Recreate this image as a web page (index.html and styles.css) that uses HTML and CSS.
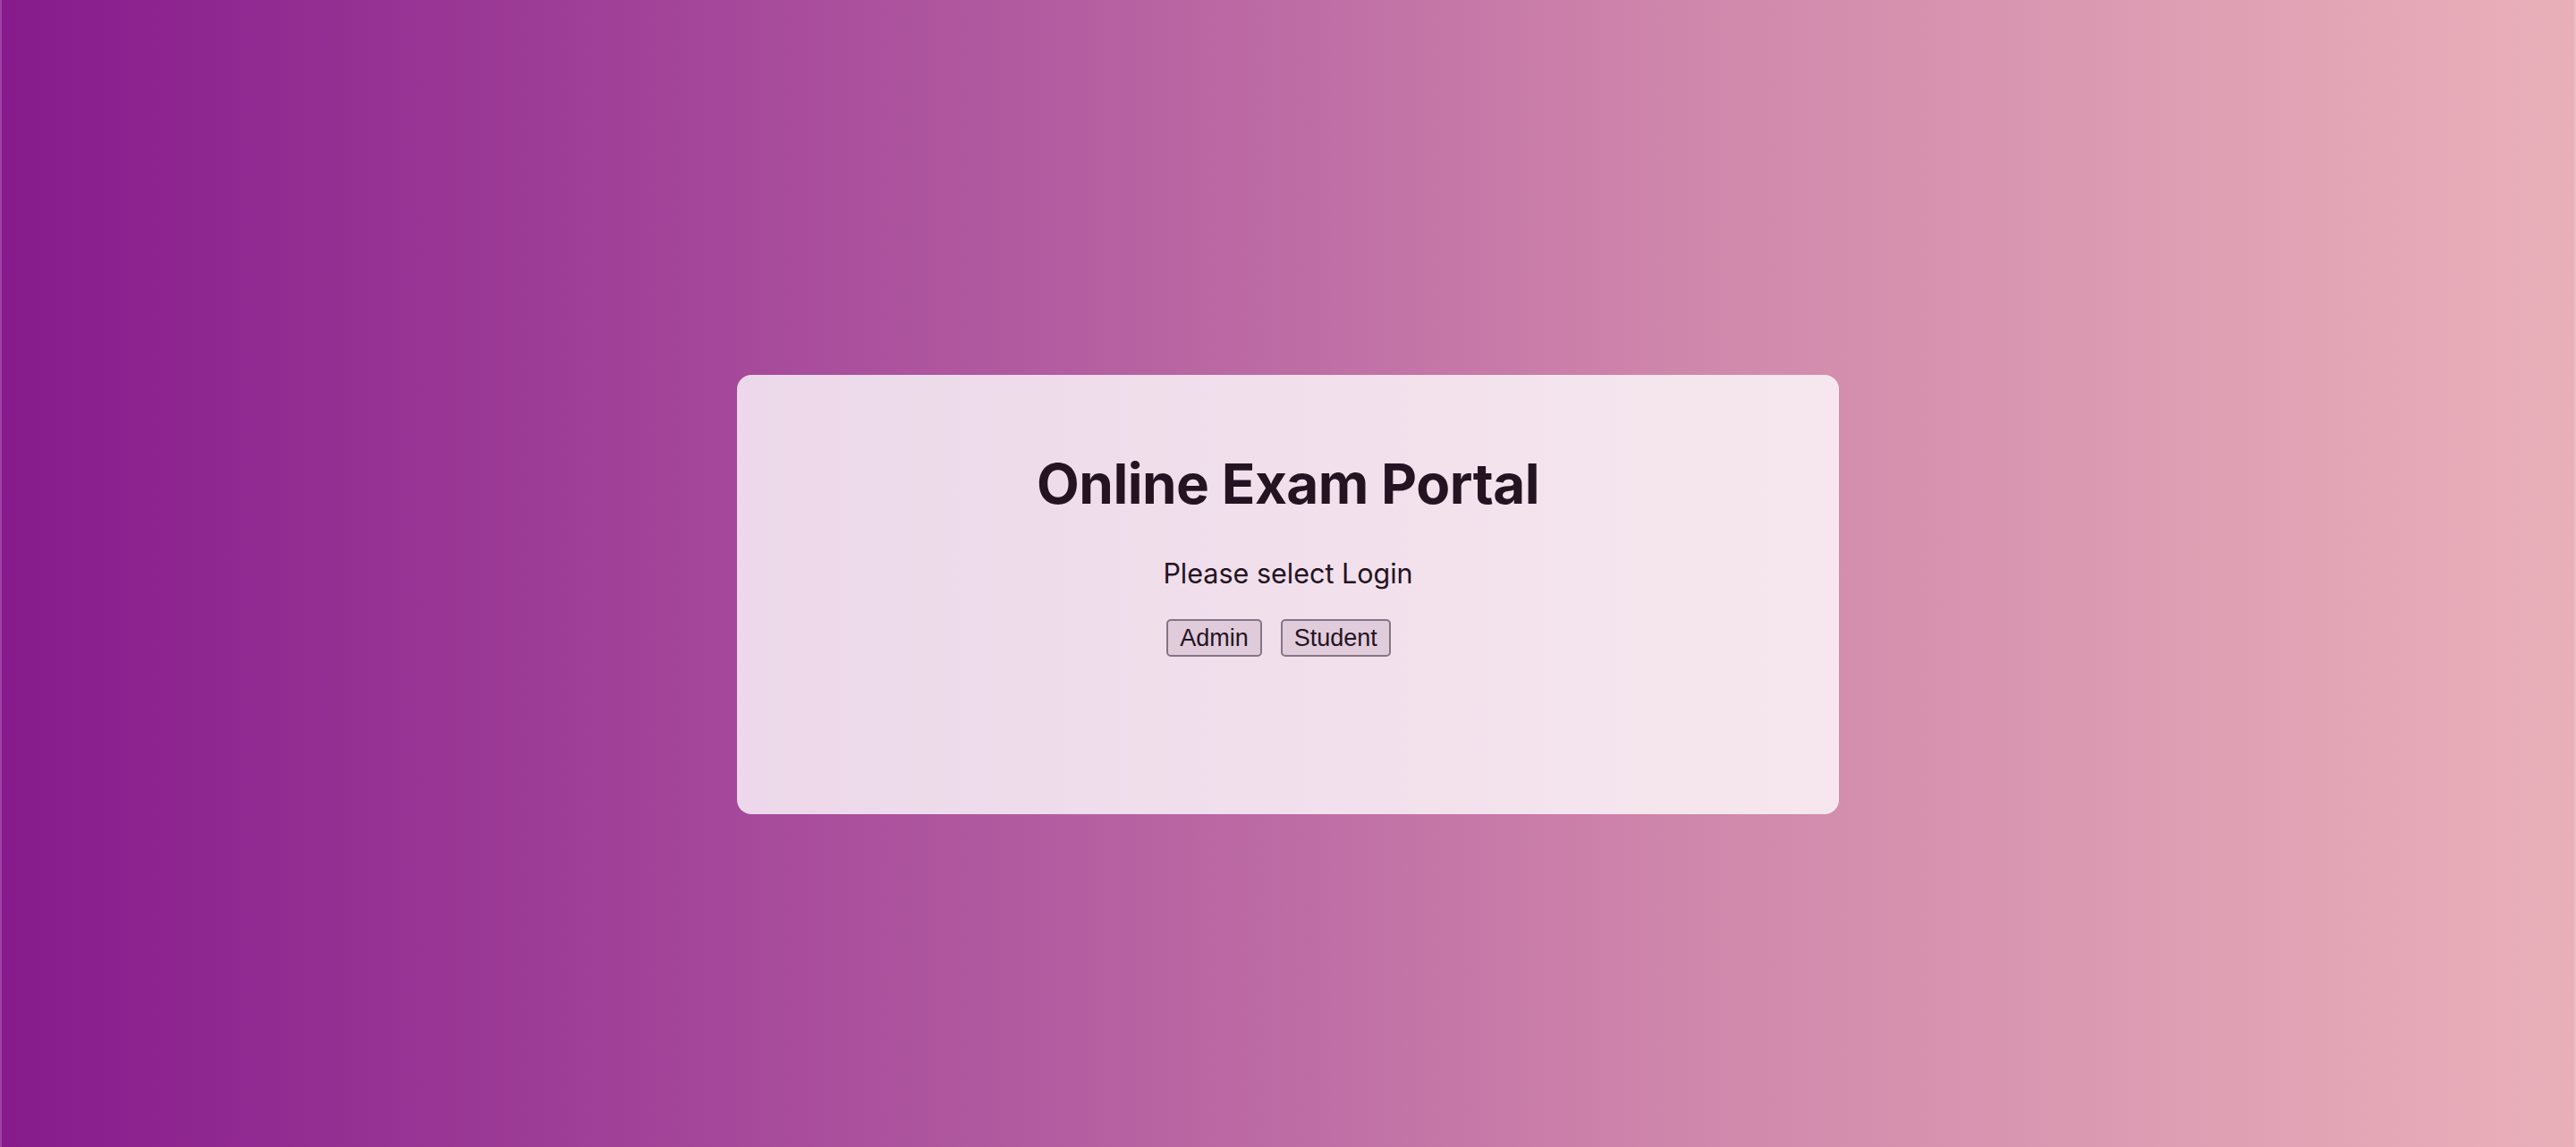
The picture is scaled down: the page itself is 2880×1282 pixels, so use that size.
FILE: index.html
```html
<!DOCTYPE html>
<html lang="en">
<head>
<meta charset="utf-8">
<title>Online Exam Portal</title>
<link rel="stylesheet" href="styles.css">
</head>
<body>
<main class="page">
  <section class="card">
    <h1 class="title">Online Exam Portal</h1>
    <p class="subtitle">Please select Login</p>
    <div class="actions">
      <button class="btn" type="button">Admin</button>
      <button class="btn" type="button">Student</button>
    </div>
  </section>
</main>
</body>
</html>
```

FILE: styles.css
```css
html, body {
  margin: 0;
  padding: 0;
  height: 100%;
}

body {
  background: linear-gradient(to right, #861a8c 0%, #b25ba0 40%, #cf86ab 65%, #e9b0b9 100%);
  border-left: 2px solid rgba(255, 255, 255, 0.18);
  border-right: 2px solid rgba(255, 255, 255, 0.18);
  box-sizing: border-box;
  font-family: Inter, "Noto Sans", sans-serif;
  color: #241422;
}

.page {
  display: flex;
  flex-direction: column;
  align-items: center;
  padding-top: 419px;
}

.card {
  width: 1232px;
  height: 491px;
  box-sizing: border-box;
  padding-top: 84px;
  background: rgba(255, 255, 255, 0.79);
  border-radius: 16px;
  display: flex;
  flex-direction: column;
  align-items: center;
}

.title {
  margin: 0;
  font-size: 62px;
  line-height: 75px;
  font-weight: 700;
  letter-spacing: -0.5px;
}

.subtitle {
  margin: 43px 0 0;
  font-size: 30.5px;
  line-height: 39px;
  font-weight: 400;
}

.actions {
  margin-top: 32px;
  padding-right: 21px;
  display: flex;
  gap: 21px;
}

.btn {
  font-family: "Liberation Sans", Arial, sans-serif;
  font-size: 27px;
  line-height: 32px;
  padding: 3px 13px;
  color: #241422;
  background: rgba(205, 180, 200, 0.45);
  border: 2px solid #857483;
  border-radius: 5px;
}
```
